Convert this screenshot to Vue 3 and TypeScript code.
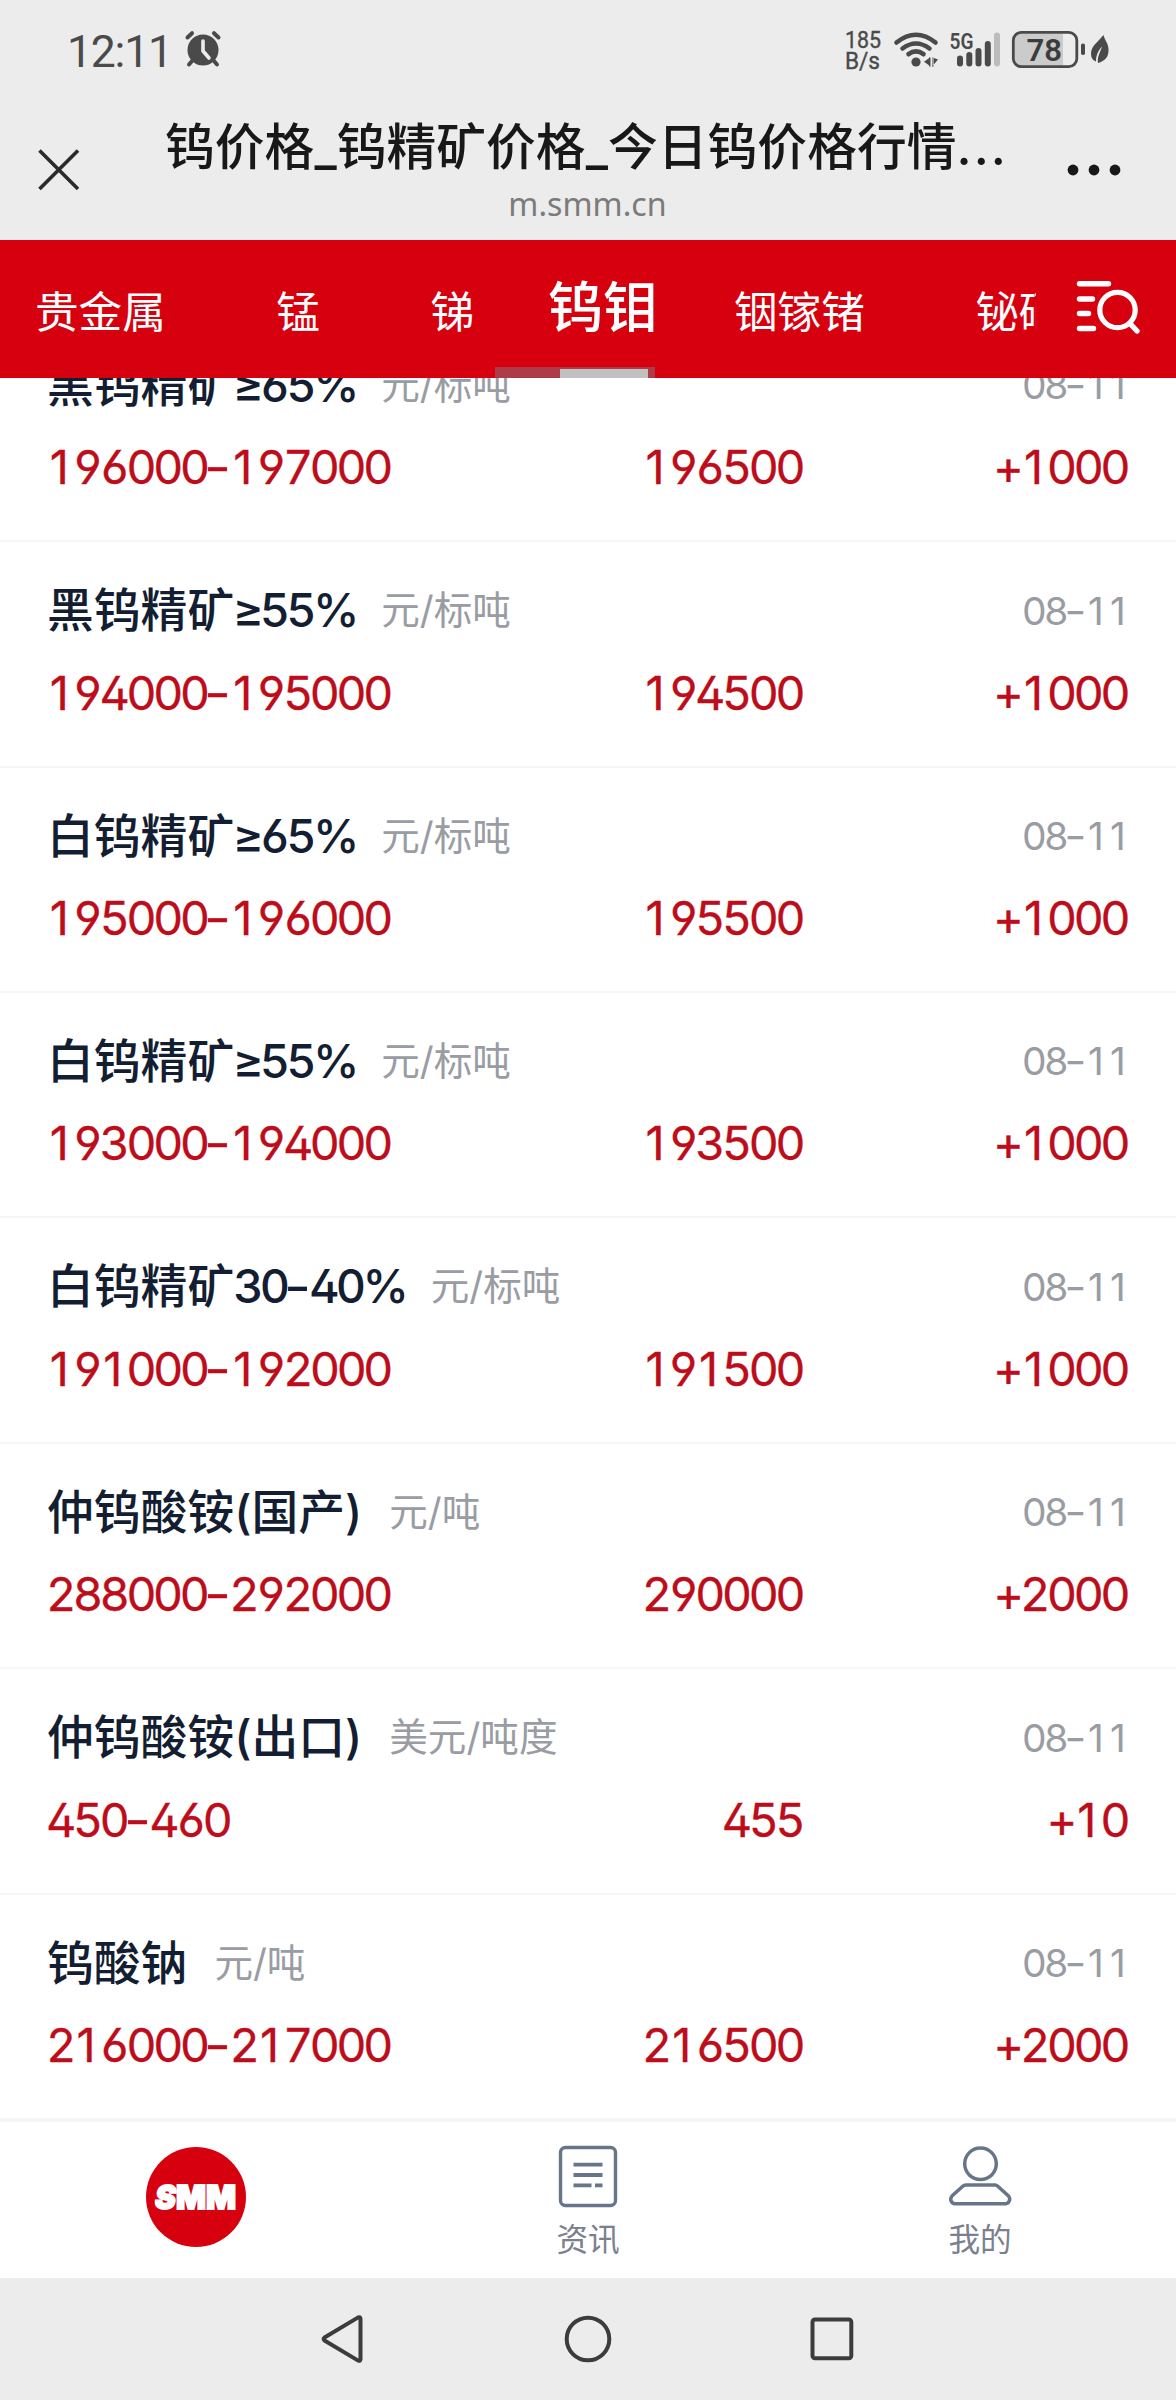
<script setup lang="ts">
import { h } from 'vue'

interface PriceRow {
  name: string
  unit: string
  range: string
  average: string
  change: string
  date: string
}

const tabs: { label: string; active?: boolean; gap: number }[] = [
  { label: '贵金属', gap: 35 },
  { label: '锰', gap: 110.5 },
  { label: '锑', gap: 110.5 },
  { label: '钨钼', gap: 74, active: true },
  { label: '铟镓锗', gap: 76 },
  { label: '铋硒碲', gap: 110.5 },
]

const rows: PriceRow[] = [
  { name: '黑钨精矿≥65%', unit: '元/标吨', range: '196000-197000', average: '196500', change: '+1000', date: '08-11' },
  { name: '黑钨精矿≥55%', unit: '元/标吨', range: '194000-195000', average: '194500', change: '+1000', date: '08-11' },
  { name: '白钨精矿≥65%', unit: '元/标吨', range: '195000-196000', average: '195500', change: '+1000', date: '08-11' },
  { name: '白钨精矿≥55%', unit: '元/标吨', range: '193000-194000', average: '193500', change: '+1000', date: '08-11' },
  { name: '白钨精矿30-40%', unit: '元/标吨', range: '191000-192000', average: '191500', change: '+1000', date: '08-11' },
  { name: '仲钨酸铵(国产)', unit: '元/吨', range: '288000-292000', average: '290000', change: '+2000', date: '08-11' },
  { name: '仲钨酸铵(出口)', unit: '美元/吨度', range: '450-460', average: '455', change: '+10', date: '08-11' },
  { name: '钨酸钠', unit: '元/吨', range: '216000-217000', average: '216500', change: '+2000', date: '08-11' },
]

const parts = (name: string) =>
  name
    .split(/([≥%\d-]+)/)
    .filter(Boolean)
    .map((text) => ({ text, grade: /[%\d]/.test(text) }))

// Figures in equal columns; "1" and "-" get their own cells.
const Figures = (props: { value: string }) =>
  h(
    'span',
    { class: 'figures' },
    props.value
      .split(/([1-])/)
      .filter(Boolean)
      .map((s) => (s === '1' ? h('span', { class: 'one' }, s) : s === '-' ? h('span', { class: 'dash' }, s) : s)),
  )
Figures.props = ['value']
</script>

<template>
  <div class="screen">
    <div class="status">
      <span class="clock">12:11</span>
      <svg class="alarm" width="38" height="38" viewBox="0 0 38 38">
        <g stroke="#4a4a4a" stroke-width="4" stroke-linecap="round">
          <path d="M3.500 7.500L8 3.200M34.500 7.500L30 3.200M8 31l-3 3.500M30 31l3 3.500" />
        </g>
        <circle cx="19" cy="20" r="15.500" fill="#4a4a4a" />
        <path d="M19 11v10l6 7" fill="none" stroke="#ececec" stroke-width="3.600" stroke-linecap="round" stroke-linejoin="round" />
      </svg>
      <span class="spacer"></span>
      <svg width="276" height="52" viewBox="840 24 276 52" fill="#4a4a4a" font-family="Roboto, sans-serif">
        <g font-size="23.500" font-weight="400" stroke="#4a4a4a" stroke-width="0.400">
          <text x="845" y="48" textLength="36" lengthAdjust="spacingAndGlyphs">185</text>
          <text x="845" y="69" textLength="35" lengthAdjust="spacingAndGlyphs">B/s</text>
        </g>
        <g fill="none" stroke="#4a4a4a" stroke-width="4.600" stroke-linecap="round">
          <path d="M896.500 42.500Q916 27 935.500 42.500M902.500 48.500Q916 38.500 929.500 48.500M908.500 54.200Q916 48.600 923.500 54.200" />
        </g>
        <circle cx="916" cy="62" r="4.600" />
        <path d="M930 57.500v8.500l-6-4.200zM932.500 57.500v8.500l5.500-6.500zM929 57.500h1.500v9h-1.500zM932 57.500h1.500v9h-1.500z" />
        <text x="949.500" y="49" font-size="22.500" font-weight="600" textLength="24" lengthAdjust="spacingAndGlyphs">5G</text>
        <rect x="957" y="55.500" width="6" height="11" rx="3" />
        <rect x="966.300" y="52" width="6" height="14.500" rx="3" />
        <rect x="975.500" y="48" width="6" height="18.500" rx="3" />
        <rect x="984.800" y="41" width="6" height="25.500" rx="3" />
        <rect x="994" y="32.500" width="6" height="34" rx="3" fill="#bcbcbc" />
        <path d="M1021 33.500H1063V66H1021Q1014 66 1014 59V40.500Q1014 33.500 1021 33.500z" fill="#cbcbcb" />
        <rect x="1013.300" y="32.300" width="63.500" height="34.400" rx="8" fill="none" stroke="#4a4a4a" stroke-width="2.800" />
        <text x="1026.500" y="61" font-size="32" font-weight="600" textLength="35.500" lengthAdjust="spacingAndGlyphs" fill="#3c3c3c">78</text>
        <rect x="1081" y="43.500" width="4" height="11.500" rx="1.800" />
        <path d="M1103.500 35C1097 43 1091 46 1091 54C1091 58 1093 60.500 1096 61.500C1096 54 1099 50 1102 46.500C1100 53 1097 57 1098 63C1105 61 1109 57 1108.500 49C1108.300 43 1105 41 1103.500 35z" />
      </svg>
    </div>

    <div class="header">
      <svg width="42" height="42" viewBox="0 0 42 42" class="close">
        <path d="M1.500 1.500L40 40M40 1.500L1.500 40" stroke="#2a2a2a" stroke-width="3.600" />
      </svg>
      <div class="heading">
        <div class="title">钨价格<i>_</i>钨精矿价格<i>_</i>今日钨价格行情<b>...</b></div>
        <div class="host">m.smm.cn</div>
      </div>
      <svg width="56" height="14" viewBox="0 0 56 14" class="more" fill="#181818">
        <circle cx="7" cy="7" r="5.400" />
        <circle cx="28" cy="7" r="5.400" />
        <circle cx="49" cy="7" r="5.400" />
      </svg>
    </div>

    <div class="tabs">
      <div class="strip">
        <span
          v-for="tab in tabs"
          :key="tab.label"
          class="tab"
          :class="{ active: tab.active }"
          :style="{ marginLeft: tab.gap + 'px' }"
        >{{ tab.label }}</span>
        <span class="track"><span class="thumb"></span></span>
      </div>
      <svg width="66" height="58" viewBox="1074 278 66 58" class="search" fill="none" stroke="#fff" stroke-linecap="round">
        <path d="M1079.500 283.800h29M1079.500 299h13M1079.500 313.500h9M1079.500 328.500h14" stroke-width="5.400" />
        <circle cx="1117.500" cy="310" r="17.700" stroke-width="5.200" />
        <path d="M1130 323.500l7 7.500" stroke-width="5.400" />
      </svg>
    </div>

    <div class="list">
      <div class="rows">
        <div v-for="row in rows" :key="row.name" class="row">
          <div class="line top">
            <span class="name">
              <template v-for="part in parts(row.name)" :key="part.text">
                <Figures v-if="part.grade" class="grade" :value="part.text" />
                <span v-else>{{ part.text }}</span>
              </template>
            </span>
            <span class="unit">{{ row.unit }}</span>
            <span class="date"><Figures :value="row.date" /></span>
          </div>
          <div class="line values">
            <span class="range"><Figures :value="row.range" /></span>
            <span class="average"><Figures :value="row.average" /></span>
            <span class="change"><Figures :value="row.change" /></span>
          </div>
        </div>
      </div>
    </div>

    <div class="tabbar">
      <div class="item">
        <svg width="102" height="102" viewBox="-51 -51 102 102" class="logo">
          <circle r="50" fill="#d7000f" />
          <text x="-41" y="12" font-family="Inter, sans-serif" font-weight="900" font-size="33" fill="#fff" stroke="#fff" stroke-width="1.800" textLength="81" lengthAdjust="spacingAndGlyphs"><tspan font-style="italic">S</tspan>MM</text>
        </svg>
      </div>
      <div class="item">
        <svg class="glyph" width="60" height="64" viewBox="0 0 60 64" fill="none" stroke="#67758a" stroke-width="3.400">
          <rect x="2.500" y="2.500" width="55" height="58" rx="5" />
          <path d="M15.500 19.700h29M15.500 30h29M15.500 40.300h18M37 40.300h7.500" stroke-width="3.800" />
        </svg>
        <span class="label">资讯</span>
      </div>
      <div class="item">
        <svg class="glyph" width="66" height="64" viewBox="0 0 66 64" fill="none" stroke="#67758a" stroke-width="3.500">
          <circle cx="33.500" cy="18.800" r="15.800" />
          <path d="M19 40h29q1.500 0 2.500 1l11 10q2 2.500.8 5t-3.600 2.700H8q-2.800-.2-3.900-2.700t.9-5l11-10q1-1 3-1z" />
        </svg>
        <span class="label">我的</span>
      </div>
    </div>

    <div class="navbar">
      <svg width="48" height="52" viewBox="0 0 48 52" fill="none" stroke="#3c3c3c" stroke-width="4" stroke-linejoin="round">
        <path d="M40.500 5.800v40.400q-.3 2.300-2.300 1.400L4.500 27.500q-1.800-1.500 0-3L38.200 4.400q2-.9 2.300 1.400z" />
      </svg>
      <svg width="52" height="52" viewBox="0 0 52 52" fill="none" stroke="#3c3c3c" stroke-width="4">
        <circle cx="26" cy="26" r="21.300" />
      </svg>
      <svg width="48" height="52" viewBox="0 0 48 52" fill="none" stroke="#3c3c3c" stroke-width="4">
        <rect x="4.500" y="6.500" width="38.800" height="38.800" rx="2.500" />
      </svg>
    </div>
  </div>
</template>

<style>
body {
  margin: 0;
  background: #fff;
}
.figures {
  font-feature-settings: "tnum", "cv02", "cv03", "cv04";
  letter-spacing: -0.08em;
}
.figures .one,
.figures .dash {
  display: inline-block;
  width: 0.57em;
  text-align: center;
  letter-spacing: 0;
  font-feature-settings: normal;
}
.figures .dash {
  width: 0.49em;
  transform: scaleX(1.25);
}
</style>

<style scoped>
.screen {
  width: 1176px;
  height: 2400px;
  display: flex;
  flex-direction: column;
  overflow: hidden;
  background: #fff;
  font-family: Inter, "Noto Sans CJK SC", sans-serif;
}
.screen span,
.title {
  white-space: nowrap;
}
svg {
  display: block;
  flex: none;
}

.status {
  height: 100px;
  display: flex;
  align-items: center;
  padding: 0 60px 0 67px;
  box-sizing: border-box;
  background: #ececec;
}
.clock {
  width: 117px;
  padding-top: 3px;
  letter-spacing: -1.2px;
  font: 400 44.5px/50px Roboto, sans-serif;
  color: #4a4a4a;
}
.alarm {
  margin-top: -2px;
}
.spacer {
  flex: 1;
}

.header {
  height: 140px;
  display: flex;
  background: #ececec;
}
.close {
  margin: 49px 0 0 38px;
}
.heading {
  width: 840px;
  margin-left: 85px;
}
.title {
  margin-top: 11px;
  font-size: 49.8px;
  line-height: 72px;
  font-weight: 500;
  color: #181818;
}
.title i {
  font-style: normal;
  font-family: Roboto, sans-serif;
}
.title b {
  font-weight: 500;
  letter-spacing: 2px;
}
.host {
  margin-top: -2px;
  padding-left: 5px;
  text-align: center;
  font: 400 32.2px/44px "Noto Sans", sans-serif;
  color: #7b7b7b;
}
.more {
  margin: 63px 0 0 61px;
}

.tabs {
  height: 138px;
  display: flex;
  background: #d7000f;
}
.strip {
  position: relative;
  width: 1036px;
  display: flex;
  overflow: hidden;
}
.tab {
  flex: none;
  margin-top: 43px;
  font-size: 43.6px;
  line-height: 60px;
  color: #fff;
}
.tab.active {
  margin-top: 27px;
  font-size: 55px;
  line-height: 80px;
  font-weight: 500;
}
.track {
  position: absolute;
  left: 495px;
  bottom: 0;
  width: 160px;
  height: 11px;
  background: #ad3c48;
}
.thumb {
  position: absolute;
  left: 65px;
  bottom: 0;
  width: 88px;
  height: 9px;
  background: #c1c1c1;
}
.search {
  margin: 38px 0 0 38px;
}

.list {
  height: 1740px;
  overflow: hidden;
}
.rows {
  margin-top: -61.2px;
}
.row {
  height: 225.4px;
  box-sizing: border-box;
  padding: 38px 47px 0 47px;
  border-bottom: 2px solid #f5f6f9;
}
.line {
  display: flex;
  align-items: center;
}
.top {
  height: 60px;
}
.name {
  display: flex;
  font-size: 46.8px;
  line-height: 60px;
  font-weight: 500;
  color: #141e32;
}
.grade {
  margin-left: -1px;
  margin-right: -1.5px;
}
.unit {
  margin: -6px 0 0 27px;
  font-size: 38.6px;
  color: #9a9ca4;
}
.date {
  margin-left: auto;
  font-size: 38.8px;
  color: #9a9ca4;
}
.values {
  height: 60px;
  margin-top: 22px;
  font-size: 47px;
  -webkit-text-stroke: 0.3px #be0d1a;
  color: #be0d1a;
}
.range {
  width: 401px;
  margin-left: -1px;
}
.average {
  width: 355px;
  text-align: right;
}
.change {
  flex: 1;
  padding-right: 2px;
  text-align: right;
}

.tabbar {
  height: 160px;
  box-sizing: border-box;
  display: flex;
  border-top: 4px solid #f5f6f6;
  background: #fff;
}
.item {
  flex: 1;
  display: flex;
  flex-direction: column;
  align-items: center;
  padding-top: 20px;
}
.logo {
  margin-top: 4px;
}
.glyph {
  margin-top: 3px;
}
.label {
  margin-top: 9px;
  font-size: 31.6px;
  line-height: 44px;
  color: #7b808f;
}

.navbar {
  height: 122px;
  display: flex;
  align-items: center;
  justify-content: space-between;
  padding: 0 320px;
  background: #ececec;
}
</style>
